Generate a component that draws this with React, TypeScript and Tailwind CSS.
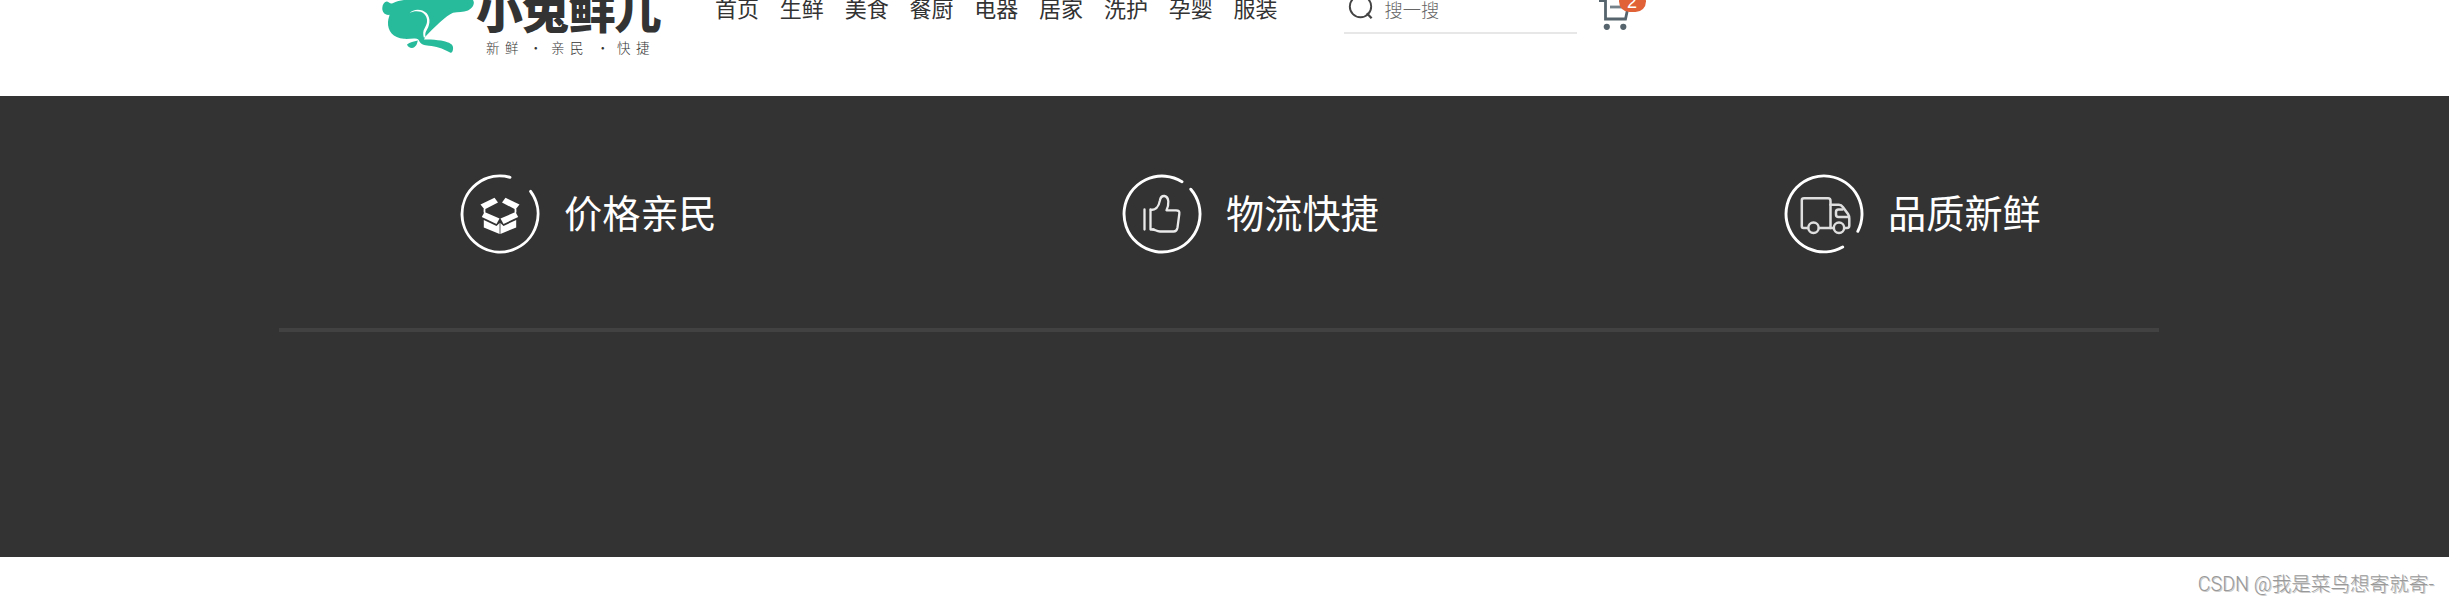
import React from "react";

const NAV = ["首页", "生鲜", "美食", "餐厨", "电器", "居家", "洗护", "孕婴", "服装"];

function Rabbit() {
  return (
    <svg className="h-[56px] w-[100px] shrink-0" viewBox="0 0 100 56" fill="#27ba9b">
      <path d="M6.500 1.500 C8.500 1.500 10 4 12 3.500 C17 1 20 .5 24 0 H93 C95 3 93.500 7.500 88 10.500 C83 12.500 78 11.500 73 12.800 C66 15.500 55 27 45.500 36.500 L44 39.500 C50 39.300 56 39.700 61 40.600 C67 41.800 72.500 43.500 73 47 C73.300 50 72.500 53.500 70 52.500 C62 48 56 46.300 49 45.700 C44 45.300 41 44.500 39.500 41.500 C38.500 39.500 38 38.500 35 38.500 C31 38.300 28 39.200 24 38.800 C13 38 7.500 31 8 22 C8.300 18 9.500 16.500 9.500 14.800 C5 15.500 2 12 2.300 8 C2.500 4.500 4 2 6.500 1.500Z" />
      <path d="M27 44.500 C30 41.800 33.500 41.800 38 40.500 C36.800 42.300 37.800 44.500 34.500 47 C32 49 28 47.500 27 44.500Z" />
      <path d="M29.500 13.200 C33 8.500 42 8.500 46.500 13 C51.500 19 49.500 26 46 31.500 C45 33.500 45.200 35.500 45.600 37.500 L43.800 37.500 C43 34 42.700 31 45 27.500 C48 22.500 47.800 17.500 44 13.800 C40 10.500 34 10.800 29.500 13.200Z" fill="#fff" />
    </svg>
  );
}

function SearchIcon() {
  return (
    <svg className="h-[27px] w-[27px] shrink-0" viewBox="0 0 27 27" fill="none" stroke="#444" strokeWidth="1.900">
      <circle cx="12.500" cy="14.500" r="10.700" />
      <path d="M18.800 21.200 L23.600 26.200" strokeWidth="2.300" />
    </svg>
  );
}

function Cart() {
  return (
    <div className="relative ml-[21px] h-[32px] w-[50px]">
      <svg className="h-[32px] w-[34px]" viewBox="0 0 34 32" fill="none" stroke="#56646d" strokeWidth="2.800">
        <path d="M1 .6 H7.500 V19 H27.500 L30.500 5" />
        <path d="M12 7 H29" stroke="#75828a" />
        <circle cx="8.800" cy="26.800" r="3.100" fill="#56646d" stroke="none" />
        <circle cx="25.300" cy="26.800" r="3.100" fill="#56646d" stroke="none" />
      </svg>
      <span className="absolute -top-[9px] left-[21px] flex h-[21px] w-[27px] items-center justify-center rounded-full bg-[#e26237] pt-px font-['Liberation_Sans',sans-serif] text-[18px] leading-none text-white">
        2
      </span>
    </div>
  );
}

function BoxIcon() {
  return (
    <svg className="h-[80px] w-[80px]" viewBox="0 0 80 80" fill="none" stroke="#fff" strokeWidth="2.900" strokeLinecap="round">
      <path d="M50 3.300 A38 38 0 1 0 70.600 17.400" />
      <g fill="#fff" stroke="none">
        <path d="M20.500 30.500 L34.500 23.800 L38 28.500 L24.500 35.500Z" />
        <path d="M59.500 30.500 L45.500 23.800 L42 28.500 L55.500 35.500Z" />
        <path d="M24.500 38 L39.500 44.500 L36.500 50 L21.800 43Z" />
        <path d="M55.500 38 L40.500 44.500 L43.500 50 L58.200 43Z" />
        <path d="M23.800 46 L36.500 52 L39.600 49 V60 L23.800 53.500Z" />
        <path d="M56.200 46 L43.500 52 L40.400 49 V60 L56.200 53.500Z" />
      </g>
      <path d="M24.500 35.500 V38 M55.500 35.500 V38" strokeWidth="1.800" />
    </svg>
  );
}

function ThumbIcon() {
  return (
    <svg className="h-[80px] w-[80px]" viewBox="0 0 80 80" fill="none" stroke="#fff" strokeWidth="2.900" strokeLinecap="round" strokeLinejoin="round">
      <path d="M60 7.700 A38 38 0 1 0 68.800 15.200" />
      <g strokeWidth="2.300" stroke="#eaeaea">
        <path d="M22.500 35.500 V55.500 M28.500 35.500 V55.500 H31.500" />
        <path d="M28.800 36 C35.500 36 37 31 37.900 26.500 C38.600 22.500 40.500 21.800 42.500 22 C47.500 23 47 31 44.500 36.300 H54 C57 36.300 57.700 37.500 57.300 40 L55.500 53.500 C55 56.500 54 57.500 51.500 57.500 H38 C34.500 57.500 33 55.500 31 55.500" />
      </g>
    </svg>
  );
}

function TruckIcon() {
  return (
    <svg className="h-[80px] w-[80px]" viewBox="0 0 80 80" fill="none" stroke="#fff" strokeWidth="2.900" strokeLinecap="round" strokeLinejoin="round">
      <path d="M58.700 73 A38 38 0 1 1 73.800 57.300" />
      <g strokeWidth="2.500" stroke="#dedede">
        <path d="M24 54 H19.500 Q17.800 54 17.800 52 V26.300 Q17.800 24.300 20 24.300 H44 Q46.500 24.300 46.500 27 V54 H35" />
        <path d="M46.500 30.800 H55 Q57.300 30.800 59 33.200 L64 40 Q65.300 42 65.300 44.500 V51.500 Q65.300 54 63 54 H60.800 M49.500 54 H46.500" />
        <path d="M58.500 35.500 H54.500 Q52 35.500 52 38 V40.500 Q52 43 54.500 43 H64.500" />
        <circle cx="29.500" cy="53.800" r="5.200" />
        <circle cx="55" cy="53.800" r="5.200" />
      </g>
    </svg>
  );
}

function Feature({ icon, label }: { icon: React.ReactNode; label: string }) {
  return (
    <li className="flex h-[80px] w-[258px] items-center">
      {icon}
      <span className="-mt-[5px] ml-[24px] text-[38.200px] leading-[50px] whitespace-nowrap text-white">{label}</span>
    </li>
  );
}

export default function App() {
  return (
    <div className="h-[605px] w-full overflow-hidden bg-white font-['Noto_Sans_CJK_SC','Noto_Sans',sans-serif]">
      <header className="flex h-[96px] items-start overflow-hidden pl-[380px]">
        <Rabbit />
        <div className="-mt-[18px] -ml-[4px] w-[194px] shrink-0 whitespace-nowrap text-[#333]">
          <div className="text-[47px] leading-[52px] font-black tracking-[-.8px]">小兔鲜儿</div>
          <div className="ml-[10px] flex pt-[4px] text-[13.500px] leading-[18px] font-light">
            <span className="w-[43px] tracking-[5.500px]">新鲜</span>
            <span className="w-[22px]">·</span>
            <span className="w-[45px] tracking-[5.500px]">亲民</span>
            <span className="w-[21px]">·</span>
            <span className="tracking-[5.500px]">快捷</span>
          </div>
        </div>
        <nav className="-mt-[9px] ml-[45px] flex gap-[20.800px] text-[22px] leading-[32px] text-[#333]">
          {NAV.map((n) => (
            <a key={n} className="whitespace-nowrap">{n}</a>
          ))}
        </nav>
        <div className="-mt-[8px] ml-[66px] flex h-[42px] w-[233px] items-start border-b-2 border-[#e7e7e7] pl-[4px]">
          <SearchIcon />
          <span className="ml-[10px] pt-[4px] text-[18.200px] leading-[27px] font-light text-[#666]">搜一搜</span>
        </div>
        <Cart />
      </header>
      <footer className="h-[461px] bg-[#333] pl-[279px]">
        <div className="h-[236px] w-[1880px] border-b-4 border-[#424242] pt-[78px]">
          <ul className="flex justify-between pr-[117px] pl-[181px]">
            <Feature icon={<BoxIcon />} label="价格亲民" />
            <Feature icon={<ThumbIcon />} label="物流快捷" />
            <Feature icon={<TruckIcon />} label="品质新鲜" />
          </ul>
        </div>
      </footer>
      <div className="flex h-[48px] items-center justify-end pr-[15px] pt-[7px] font-['Roboto','Noto_Sans_CJK_SC',sans-serif] text-[19.600px] font-light whitespace-nowrap text-[#999] [text-shadow:1px_1px_0_#ccc]">
        CSDN @我是菜鸟想寄就寄-
      </div>
    </div>
  );
}
